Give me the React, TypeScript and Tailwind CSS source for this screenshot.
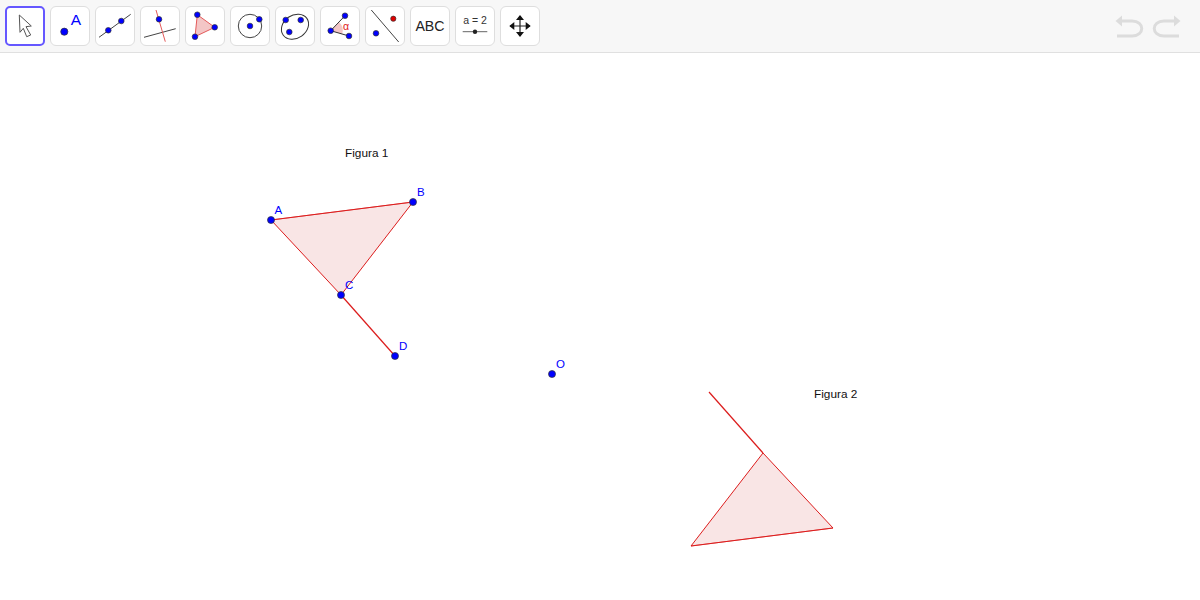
import type { ReactNode } from "react";

const BLUE = "#0000ff";
const Dot = ({ x, y, r = 3.2, fill = BLUE }: { x: number; y: number; r?: number; fill?: string }) => (
  <circle cx={x} cy={y} r={r} fill={fill} stroke="#333" strokeWidth={0.7} />
);

const icons: ReactNode[] = [
  <path d="M14.3 9 26.3 20 21 20.7 25.7 29 21.7 30.7 18.3 22.3 15 26.3Z" fill="#fff" stroke="#555" strokeWidth={1} strokeLinejoin="round" />,
  <>
    <Dot x={14.3} y={25.7} r={3.6} />
    <text x={26} y={19} textAnchor="middle" fontSize={15.5} fill="#0000ff">A</text>
  </>,
  <>
    <line x1={4} y1={31.3} x2={35.7} y2={8.3} stroke="#444" />
    <Dot x={13.3} y={24.3} r={2.8} />
    <Dot x={26.3} y={15} r={2.8} />
  </>,
  <>
    <line x1={4} y1={31.3} x2={35.7} y2={22.7} stroke="#444" />
    <line x1={16} y1={4} x2={25.3} y2={35.7} stroke="#e45a5a" />
    <Dot x={19} y={13.3} r={2.8} />
  </>,
  <>
    <polygon points="12.3,8.7 29.7,21.3 10,30.7" fill="#f3c6c6" stroke="#e45a5a" />
    <Dot x={12.3} y={8.7} r={2.8} />
    <Dot x={29.7} y={21.3} r={2.8} />
    <Dot x={10} y={30.7} r={2.8} />
  </>,
  <>
    <circle cx={20} cy={20} r={11.7} fill="none" stroke="#444" />
    <Dot x={20} y={20} r={2.8} />
    <Dot x={29.3} y={13.3} r={2.8} />
  </>,
  <>
    <ellipse cx={20} cy={20.7} rx={14.5} ry={11.5} transform="rotate(-35 20 20.7)" fill="none" stroke="#333" />
    <Dot x={10.7} y={14} r={2.8} />
    <Dot x={25.7} y={14} r={2.8} />
    <Dot x={14.3} y={26} r={2.8} />
  </>,
  <>
    <path d="M10.7 24.7 19 16A12 12 0 0 1 22.2 28Z" fill="#f3c6c6" />
    <line x1={10.7} y1={24.7} x2={25} y2={9.7} stroke="#333" />
    <line x1={10.7} y1={24.7} x2={29} y2={30} stroke="#333" />
    <text x={26} y={23.5} textAnchor="middle" fontSize={10.5} fill="#e02020">α</text>
    <Dot x={10.7} y={24.7} r={2.8} />
    <Dot x={25} y={9.7} r={2.8} />
    <Dot x={29} y={30} r={2.8} />
  </>,
  <>
    <line x1={6.3} y1={4} x2={33.7} y2={36} stroke="#444" />
    <Dot x={11} y={27.3} r={2.8} />
    <Dot x={28.3} y={12.7} r={2.6} fill="#e00000" />
  </>,
  <text x={20} y={25.2} textAnchor="middle" fontSize={14.2} fill="#222">ABC</text>,
  <>
    <text x={20} y={18.3} textAnchor="middle" fontSize={10.5} fill="#333">a = 2</text>
    <line x1={7.7} y1={25.7} x2={32.3} y2={25.7} stroke="#666" />
    <circle cx={20} cy={25.7} r={2.2} fill="#222" />
  </>,
  <>
    <path d="M20 10V30M10 20H30" stroke="#222" strokeWidth={1.2} />
    <path d="M20 9 16 14H24ZM20 31 16 26H24ZM9.3 20 14.3 16V24ZM30.7 20 25.7 16V24Z" fill="#111" />
  </>,
];

const Label = ({ x, y, t }: { x: number; y: number; t: string }) => (
  <text x={x} y={y} fontSize={11.5} fill="#0000ff">{t}</text>
);

const RED = "#dc1c1c";
const FILL = "#f9e5e5";

export default function App() {
  return (
    <div className="flex h-[600px] w-full flex-col overflow-hidden bg-white font-['Liberation_Sans',sans-serif]">
      <div className="flex h-[53px] shrink-0 items-start justify-between border-b border-[#e0e0e0] bg-[#f7f7f7] pt-[6px] pl-[5px] pr-[18px]">
        <div className="flex gap-[5px]">
          {icons.map((icon, i) => (
            <div
              key={i}
              className={
                i === 0
                  ? "box-border flex h-[40px] w-[40px] items-center justify-center rounded-[5px] border-2 border-[#6557ff] bg-white"
                  : "box-border flex h-[40px] w-[40px] items-center justify-center rounded-[6px] border border-[#dedede] bg-white"
              }
            >
              <svg width={40} height={40} viewBox="0 0 40 40" className="shrink-0">
                {icon}
              </svg>
            </div>
          ))}
        </div>
        <div className="flex gap-[4px] pt-[6px]">
          <svg width={32} height={28} viewBox="0 0 32 28">
            <path d="M7 9H18C31 9 31 24 18 24H3" fill="none" stroke="#dcdcdc" strokeWidth={3} />
            <path d="M1.5 9 8 3.5V14.5Z" fill="#dcdcdc" />
          </svg>
          <svg width={32} height={28} viewBox="0 0 32 28">
            <path d="M25 9H14C1 9 1 24 14 24H29" fill="none" stroke="#dcdcdc" strokeWidth={3} />
            <path d="M30.5 9 24 3.5V14.5Z" fill="#dcdcdc" />
          </svg>
        </div>
      </div>
      <div className="min-h-0 flex-1">
        <svg width={1200} height={547} viewBox="0 53 1200 547" className="block">
          <polygon points="271,220 413,202 341,295" fill={FILL} stroke={RED} strokeWidth={1} />
          <line x1={271} y1={220} x2={413} y2={202} stroke={RED} strokeWidth={0.6} />
          <line x1={341} y1={295} x2={395} y2={356} stroke={RED} strokeWidth={1.2} />
          <polygon points="833,528 691,546 763,453" fill={FILL} stroke={RED} strokeWidth={1} />
          <line x1={833} y1={528} x2={691} y2={546} stroke={RED} strokeWidth={0.6} />
          <line x1={763} y1={453} x2={709} y2={392} stroke={RED} strokeWidth={1.2} />
          <text x={345} y={157} fontSize={11.8} fill="#111">Figura 1</text>
          <text x={814} y={398} fontSize={11.8} fill="#111">Figura 2</text>
          <Dot x={271} y={220} r={3.5} />
          <Dot x={413} y={202} r={3.5} />
          <Dot x={341} y={295} r={3.5} />
          <Dot x={395} y={356} r={3.5} />
          <Dot x={552} y={374} r={3.5} />
          <Label x={274.5} y={214} t="A" />
          <Label x={417} y={196} t="B" />
          <Label x={345} y={289} t="C" />
          <Label x={399} y={350} t="D" />
          <Label x={556} y={368} t="O" />
        </svg>
      </div>
    </div>
  );
}
